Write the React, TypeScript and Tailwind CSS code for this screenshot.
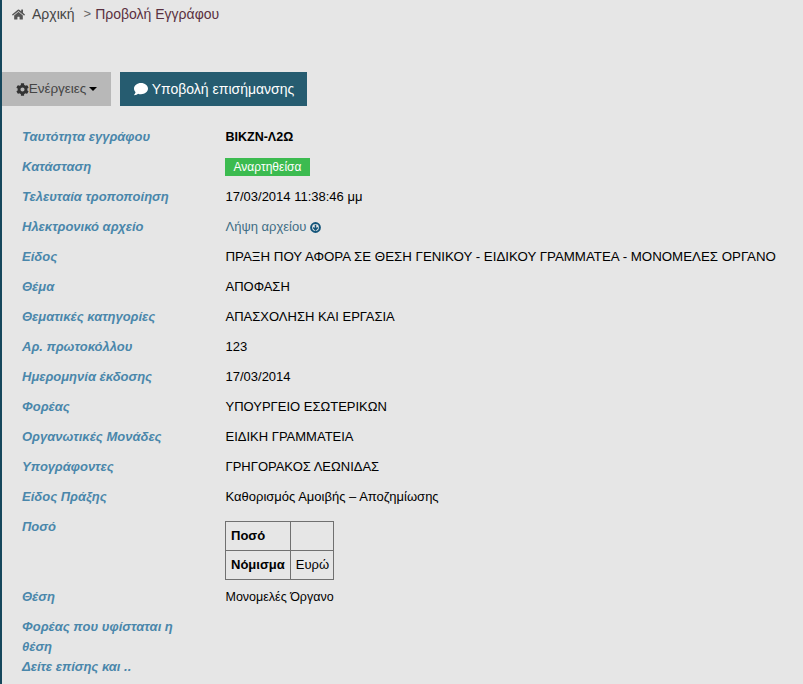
import { FaCog, FaComment, FaHome } from "react-icons/fa";

const rows: { label: string; value: string; wide?: boolean }[] = [
  { label: "Είδος", value: "ΠΡΑΞΗ ΠΟΥ ΑΦΟΡΑ ΣΕ ΘΕΣΗ ΓΕΝΙΚΟΥ - ΕΙΔΙΚΟΥ ΓΡΑΜΜΑΤΕΑ - ΜΟΝΟΜΕΛΕΣ ΟΡΓΑΝΟ", wide: true },
  { label: "Θέμα", value: "ΑΠΟΦΑΣΗ" },
  { label: "Θεματικές κατηγορίες", value: "ΑΠΑΣΧΟΛΗΣΗ ΚΑΙ ΕΡΓΑΣΙΑ" },
  { label: "Αρ. πρωτοκόλλου", value: "123" },
  { label: "Ημερομηνία έκδοσης", value: "17/03/2014" },
  { label: "Φορέας", value: "ΥΠΟΥΡΓΕΙΟ ΕΣΩΤΕΡΙΚΩΝ" },
  { label: "Οργανωτικές Μονάδες", value: "ΕΙΔΙΚΗ ΓΡΑΜΜΑΤΕΙΑ" },
  { label: "Υπογράφοντες", value: "ΓΡΗΓΟΡΑΚΟΣ ΛΕΩΝΙΔΑΣ" },
  { label: "Είδος Πράξης", value: "Καθορισμός Αμοιβής – Αποζημίωσης" },
];

// white ticks over the left rule
const ticks = [35, 76, 117, 158, 199, 240, 281];

function Row({ label, wide, children }: { label: string; wide?: boolean; children?: React.ReactNode }) {
  return (
    <div className="flex h-[30px] leading-5">
      <div className="w-[203.5px] shrink-0 pt-[5px] pr-6 text-[13px] font-bold italic text-[#4a87ab]">{label}</div>
      <div className={`pt-[5px] text-black ${wide ? "text-[13.3px]" : "text-[13px]"}`}>{children}</div>
    </div>
  );
}

export default function App() {
  return (
    <div className="relative h-[684px] overflow-hidden border-l-2 border-[#16475c] bg-[#e6e6e6] font-['Liberation_Sans',Arial,sans-serif]">
      {ticks.map((y) => (
        <span key={y} className="absolute -left-[2px] h-px w-[2px] bg-white" style={{ top: y }} />
      ))}

      <div className="flex h-[28px] items-center pl-[10px] text-sm">
        <FaHome className="mr-[7px] text-[13px] text-[#555]" />
        <span className="text-[#444]">Αρχική</span>
        <span className="mr-[4px] ml-[9px] text-[13px] text-[#666]">&gt;</span>
        <span className="text-[#5a3040]">Προβολή Εγγράφου</span>
      </div>

      <div className="mt-[44px] flex gap-[9px]">
        <button className="flex h-[34px] w-[109px] items-center justify-center bg-[#b8b8b8] text-[13.5px] text-[#444]">
          <FaCog className="text-[13px] text-[#333]" />
          Ενέργειες
          <span className="ml-[3px] border-x-4 border-t-4 border-x-transparent border-t-black" />
        </button>
        <button className="flex h-[34px] w-[187px] items-center justify-center gap-1 bg-[#265c70] pl-px text-sm text-white">
          <FaComment className="text-sm" />
          Υποβολή επισήμανσης
        </button>
      </div>

      <div className="mt-[16px] pl-[20px]">
        <Row label="Ταυτότητα εγγράφου">
          <span className="text-[12.5px] font-bold">ΒΙΚΖΝ-Λ2Ω</span>
        </Row>
        <div className="flex h-[30px] leading-5">
          <div className="w-[204px] shrink-0 pt-[5px] text-[13px] font-bold italic text-[#4a87ab]">Κατάσταση</div>
          <span className="-ml-px inline-block h-[18px] w-[85px] translate-y-[6px] bg-[#3cbb50] text-center text-xs leading-[18px] text-white">Αναρτηθείσα</span>
        </div>
        <Row label="Τελευταία τροποποίηση">17/03/2014 11:38:46 μμ</Row>
        <Row label="Ηλεκτρονικό αρχείο">
          <span className="flex items-center gap-1 text-[#3f6d85]">
            Λήψη αρχείου
            <svg viewBox="0 0 11 11" className="h-[11px] w-[11px] text-[#14557a]" fill="none" stroke="currentColor">
              <circle cx="5.5" cy="5.5" r="4.4" strokeWidth="2" />
              <path d="M5.5 2.8v5M3.2 5.4l2.3 2.4 2.3-2.4" strokeWidth="1.5" />
            </svg>
          </span>
        </Row>
        {rows.map((r) => (
          <Row key={r.label} label={r.label} wide={r.wide}>
            {r.value}
          </Row>
        ))}
        <div className="flex">
          <div className="w-[204px] shrink-0 pt-[5px] text-[13px] leading-5 font-bold italic text-[#4a87ab]">Ποσό</div>
          <table className="mt-[9px] mb-[2px] -ml-px h-[59px] border-collapse text-[13px] text-black">
            <tbody>
              <tr>
                <th className="border border-[#707070] px-[5px] text-left font-bold">Ποσό</th>
                <td className="border border-[#707070] pr-[4px] pl-[5px]" />
              </tr>
              <tr>
                <th className="border border-[#707070] px-[5px] text-left font-bold">Νόμισμα</th>
                <td className="border border-[#707070] pr-[4px] pl-[5px]">Ευρώ</td>
              </tr>
            </tbody>
          </table>
        </div>
        <Row label="Θέση">
          <span className="text-[12.5px]">Μονομελές Όργανο</span>
        </Row>
        <div className="w-[180px] pt-[5px] text-[13px] leading-5 font-bold italic text-[#4a87ab]">
          <div>Φορέας που υφίσταται η θέση</div>
          <div>Δείτε επίσης και ..</div>
        </div>
      </div>
    </div>
  );
}
